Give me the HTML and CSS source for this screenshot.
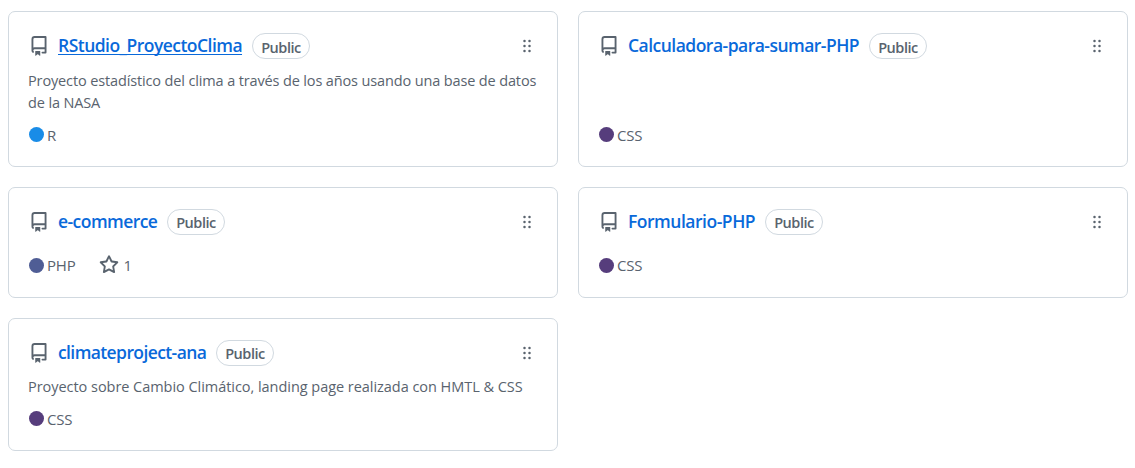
FILE: index.html
```html
<!DOCTYPE html>
<html lang="es">
<head>
<meta charset="utf-8">
<title>Repositorios</title>
<link rel="stylesheet" href="styles.css">
</head>
<body>
<svg class="defs" aria-hidden="true">
  <symbol id="repo" viewBox="0 0 16 16"><path d="M2 2.5A2.5 2.5 0 0 1 4.5 0h8.750a.75.75 0 0 1 .75.75v12.500a.75.75 0 0 1-.75.75h-2.500a.75.75 0 0 1 0-1.500h1.750v-2h-8a1 1 0 0 0-.714 1.700.75.75 0 1 1-1.072 1.050A2.495 2.495 0 0 1 2 11.500Zm10.500-1h-8a1 1 0 0 0-1 1v6.708A2.486 2.486 0 0 1 4.500 9h8ZM5 12.250a.25.25 0 0 1 .25-.25h3.500a.25.25 0 0 1 .25.25v3.250a.25.25 0 0 1-.4.200l-1.450-1.087a.249.249 0 0 0-.300 0L5.400 15.700a.25.25 0 0 1-.4-.200Z"/></symbol>
  <symbol id="grip" viewBox="0 0 16 16"><path d="M10 13a1 1 0 1 1 0-2 1 1 0 0 1 0 2Zm0-4a1 1 0 1 1 0-2 1 1 0 0 1 0 2Zm-4 4a1 1 0 1 1 0-2 1 1 0 0 1 0 2Zm5-9a1 1 0 1 1-2 0 1 1 0 0 1 2 0ZM7 8a1 1 0 1 1-2 0 1 1 0 0 1 2 0ZM6 5a1 1 0 1 1 0-2 1 1 0 0 1 0 2Z"/></symbol>
  <symbol id="star" viewBox="0 0 16 16"><path d="M8 .25a.75.75 0 0 1 .673.418l1.882 3.815 4.210.612a.75.75 0 0 1 .416 1.279l-3.046 2.970.719 4.192a.751.751 0 0 1-1.088.791L8 12.347l-3.766 1.980a.75.75 0 0 1-1.088-.790l.720-4.194L.818 6.374a.75.75 0 0 1 .416-1.280l4.210-.611L7.327.668A.75.75 0 0 1 8 .25Zm0 2.445L6.615 5.500a.75.75 0 0 1-.564.410l-3.097.450 2.240 2.184a.75.75 0 0 1 .216.664l-.528 3.084 2.769-1.456a.75.75 0 0 1 .698 0l2.770 1.456-.530-3.084a.75.75 0 0 1 .216-.664l2.240-2.183-3.096-.450a.75.75 0 0 1-.564-.410L8 2.694Z"/></symbol>
</svg>
<main class="grid">
  <article class="card">
    <header class="head"><svg class="icon"><use href="#repo"/></svg><a class="name hovered w1">RStudio_ProyectoClima</a><span class="badge low">Public</span><svg class="icon grip"><use href="#grip"/></svg></header>
    <p class="desc">Proyecto estadístico del clima a través de los años usando una base de datos<br>de la NASA</p>
    <footer class="meta low"><i class="dot r"></i><span>R</span></footer>
  </article>
  <article class="card">
    <header class="head"><svg class="icon"><use href="#repo"/></svg><a class="name w2">Calculadora-para-sumar-PHP</a><span class="badge low">Public</span><svg class="icon grip"><use href="#grip"/></svg></header>
    <footer class="meta low"><i class="dot css"></i><span>CSS</span></footer>
  </article>
  <article class="card">
    <header class="head"><svg class="icon"><use href="#repo"/></svg><a class="name w3">e-commerce</a><span class="badge">Public</span><svg class="icon grip"><use href="#grip"/></svg></header>
    <footer class="meta"><i class="dot php"></i><span>PHP</span><svg class="icon star"><use href="#star"/></svg><span>1</span></footer>
  </article>
  <article class="card">
    <header class="head"><svg class="icon"><use href="#repo"/></svg><a class="name w4">Formulario-PHP</a><span class="badge">Public</span><svg class="icon grip"><use href="#grip"/></svg></header>
    <footer class="meta"><i class="dot css"></i><span>CSS</span></footer>
  </article>
  <article class="card">
    <header class="head"><svg class="icon"><use href="#repo"/></svg><a class="name w5">climateproject-ana</a><span class="badge">Public</span><svg class="icon grip"><use href="#grip"/></svg></header>
    <p class="desc short">Proyecto sobre Cambio Climático, landing page realizada con HMTL &amp; CSS</p>
    <footer class="meta low"><i class="dot css"></i><span>CSS</span></footer>
  </article>
</main>
</body>
</html>
```
FILE: styles.css
```css
* { box-sizing: border-box; }
body { margin: 0; background: #fff; color: #59636e; font-family: "Open Sans", "Noto Sans", sans-serif; font-size: 15px; overflow: hidden; }
.defs { position: absolute; width: 0; height: 0; }
.grid { display: grid; grid-template-columns: 550px 550px; grid-template-rows: 156px 111px 133px; gap: 20px; padding: 11px 8px; }
.card { display: flex; flex-direction: column; border: 1px solid #d1d9e0; border-radius: 7px; padding: 20px 20px 21px; }
.head { display: flex; align-items: center; height: 28px; }
.icon { width: 20px; height: 20px; fill: #59636e; flex: none; }
.name { margin-left: 9px; color: #0969da; font-size: 17.5px; font-weight: 600; line-height: 24px; height: 26px; white-space: nowrap; letter-spacing: -0.55px; }
.hovered { text-decoration: underline; text-decoration-thickness: 1px; text-underline-offset: 2px; text-decoration-skip-ink: none; }
.w1 { width: 184px; letter-spacing: -0.53px; }
.w2 { width: 231px; letter-spacing: -0.52px; }
.w3 { width: 99px; }
.w4 { width: 127px; letter-spacing: -0.48px; }
.w5 { width: 148px; letter-spacing: -0.6px; }
.badge { width: 58px; height: 26px; margin-left: 10px; border: 1px solid #d1d9e0; border-radius: 13px; font-size: 14.5px; font-weight: 600; line-height: 25px; text-align: center; letter-spacing: -0.45px; }
.badge.low { line-height: 27px; }
.grip { margin-left: auto; }
.desc { margin: 10px 0 0 -1px; font-size: 14.5px; line-height: 22px; white-space: nowrap; letter-spacing: -0.135px; }
.desc.short { margin-top: 9px; letter-spacing: -0.04px; }
.meta { display: flex; align-items: center; height: 22px; margin-top: auto; letter-spacing: -0.2px; }
.meta.low span { padding-top: 2px; }
.dot { width: 15px; height: 15px; border-radius: 50%; margin-right: 3px; }
.r { background: #198ce7; }
.css { background: #563d7c; }
.php { background: #4f5d95; }
.star { margin: 0 5px 1px 23px; }
```
